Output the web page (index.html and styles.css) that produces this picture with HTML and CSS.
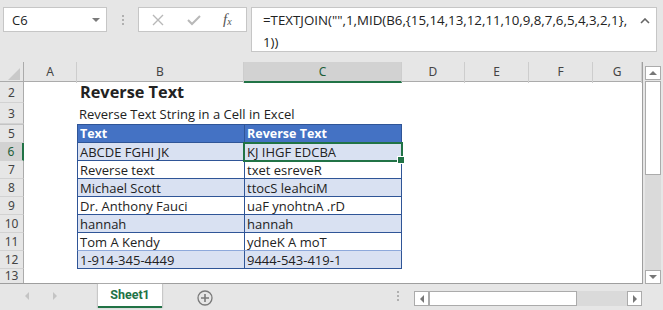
FILE: index.html
```html
<!DOCTYPE html>
<html>
<head>
    <link rel="stylesheet" href="styles.css">
</head>
<body>
    <div class="toolbar">
        <div class="namebox"><span>C6</span><span class="caret"></span></div>
        <div class="grip"><i></i><i></i><i></i></div>
        <div class="fxbox">
            <svg width="12" height="12" viewBox="0 0 12 12"><path d="M1 1 L11 11 M11 1 L1 11" stroke="#b8b8b8" stroke-width="1.4" fill="none"/></svg>
            <svg width="14" height="12" viewBox="0 0 14 12"><path d="M1 6 L5 10 L13 2" stroke="#b8b8b8" stroke-width="2" fill="none"/></svg>
            <span class="fx">f<sub>x</sub></span>
        </div>
        <div class="formula">
            <div class="ftext">=TEXTJOIN("",1,MID(B6,{15,14,13,12,11,10,9,8,7,6,5,4,3,2,1},<br>1))</div>
            <svg class="collapse" width="10" height="6" viewBox="0 0 10 6"><path d="M1 5 L5 1 L9 5" stroke="#666" stroke-width="1.6" fill="none"/></svg>
        </div>
    </div>

    <div class="main">
        <div class="sheet">
            <div class="row colheads">
                <div class="corner"><span class="tri"></span></div>
                <div class="ch">A</div>
                <div class="ch">B</div>
                <div class="ch sel">C</div>
                <div class="ch">D</div>
                <div class="ch">E</div>
                <div class="ch">F</div>
                <div class="ch">G</div>
            </div>
            <div class="row tall">
                <div class="rh">2</div><div></div>
                <div class="cell title">Reverse Text</div><div></div><div></div><div></div><div></div><div></div>
            </div>
            <div class="row tall">
                <div class="rh">3</div><div></div>
                <div class="cell sub">Reverse Text String in a Cell in Excel</div><div></div><div></div><div></div><div></div><div></div>
            </div>
            <div class="row head-row">
                <div class="rh hidden-above">5</div><div></div>
                <div class="cell t th">Text</div><div class="cell t tc th">Reverse Text</div><div></div><div></div><div></div><div></div>
            </div>
            <div class="row">
                <div class="rh sel">6</div><div></div>
                <div class="cell t band">ABCDE FGHI JK</div><div class="cell t tc band active">KJ IHGF EDCBA</div><div></div><div></div><div></div><div></div>
            </div>
            <div class="row">
                <div class="rh">7</div><div></div>
                <div class="cell t">Reverse text</div><div class="cell t tc">txet esreveR</div><div></div><div></div><div></div><div></div>
            </div>
            <div class="row">
                <div class="rh">8</div><div></div>
                <div class="cell t band">Michael Scott</div><div class="cell t tc band">ttocS leahciM</div><div></div><div></div><div></div><div></div>
            </div>
            <div class="row">
                <div class="rh">9</div><div></div>
                <div class="cell t">Dr. Anthony Fauci</div><div class="cell t tc">uaF ynohtnA .rD</div><div></div><div></div><div></div><div></div>
            </div>
            <div class="row">
                <div class="rh">10</div><div></div>
                <div class="cell t band">hannah</div><div class="cell t tc band">hannah</div><div></div><div></div><div></div><div></div>
            </div>
            <div class="row">
                <div class="rh">11</div><div></div>
                <div class="cell t light-bottom">Tom A Kendy</div><div class="cell t tc light-bottom">ydneK A moT</div><div></div><div></div><div></div><div></div>
            </div>
            <div class="row">
                <div class="rh">12</div><div></div>
                <div class="cell t band">1-914-345-4449</div><div class="cell t tc band">9444-543-419-1</div><div></div><div></div><div></div><div></div>
            </div>
            <div class="row last">
                <div class="rh">13</div><div></div><div></div><div></div><div></div><div></div><div></div><div></div>
            </div>
        </div>
        <div class="vscroll">
            <div class="sbtn"><span class="arr up"></span></div>
            <div class="vthumb"></div>
            <div class="vtrack"></div>
            <div class="sbtn"><span class="arr down"></span></div>
        </div>
    </div>

    <div class="tabbar">
        <div class="nav"><span class="arr left"></span><span class="arr right"></span></div>
        <div class="tab">Sheet1</div>
        <div class="add">
            <svg width="16" height="16" viewBox="0 0 16 16"><circle cx="8" cy="8" r="7" stroke="#7a7a7a" stroke-width="1.3" fill="none"/><path d="M8 4 V12 M4 8 H12" stroke="#7a7a7a" stroke-width="1.6"/></svg>
        </div>
        <div class="spacer"></div>
        <div class="grip hgrip"><i></i><i></i><i></i></div>
        <div class="hscroll">
            <div class="sbtn"><span class="arr left dark"></span></div>
            <div class="hthumb"></div>
            <div class="htrack"></div>
            <div class="sbtn"><span class="arr right dark"></span></div>
        </div>
    </div>
</body>
</html>
```

FILE: styles.css
```css
* {
    box-sizing: border-box;
}
body {
    margin: 0;
    width: 663px;
    height: 310px;
    overflow: hidden;
    background-color: #e6e6e6;
    font-family: "Open Sans", "Liberation Sans", sans-serif;
    color: #222;
}

/* formula bar */
.toolbar {
    height: 62px;
    display: flex;
    align-items: flex-start;
    padding: 7px 6px 0 3px;
}
.namebox {
    width: 104px;
    height: 25px;
    background-color: #fff;
    border: 1px solid #c6c6c6;
    display: flex;
    align-items: center;
    justify-content: space-between;
    padding: 0 6px 0 8px;
    font-size: 13px;
}
.caret {
    border-left: 4px solid transparent;
    border-right: 4px solid transparent;
    border-top: 4px solid #7a7a7a;
}
.grip {
    width: 31px;
    height: 25px;
    display: flex;
    flex-direction: column;
    align-items: center;
    justify-content: center;
    gap: 2px;
}
.grip i {
    width: 2px;
    height: 2px;
    background-color: #b0b0b0;
}
.fxbox {
    width: 109px;
    height: 25px;
    background-color: #fff;
    border: 1px solid #c6c6c6;
    display: flex;
    align-items: center;
    padding-left: 13px;
    gap: 23px;
}
.fx {
    font-family: "Liberation Serif", serif;
    font-style: italic;
    font-size: 15px;
    color: #555;
    margin-left: -1px;
}
.fx sub {
    font-size: 10px;
    vertical-align: -1px;
}
.formula {
    margin-left: 4px;
    flex: 1;
    height: 45px;
    background-color: #fff;
    border: 1px solid #c6c6c6;
    display: flex;
    justify-content: space-between;
    padding: 1px 6px 0 11px;
}
.ftext {
    font-size: 13.3px;
    line-height: 22px;
}
.collapse {
    margin-top: 9px;
}

/* grid */
.main {
    display: flex;
    height: 222px;
}
.sheet {
    width: 643px;
    border-right: 1px solid #9e9e9e;
    border-bottom: 1px solid #9e9e9e;
    background-color: #fff;
    overflow: hidden;
}
.row {
    display: grid;
    grid-template-columns: 24px 53px 167px 158px 63px 64px 64px 49px;
    height: 18px;
}
.row.tall {
    height: 21px;
}
.row.head-row {
    height: 19px;
}
.colheads {
    height: 20px;
    background-color: #e6e6e6;
    border-bottom: 1px solid #ababab;
}
.corner {
    border-right: 1px solid #ababab;
    position: relative;
}
.tri {
    position: absolute;
    right: 3px;
    bottom: 3px;
    border-left: 12px solid transparent;
    border-bottom: 12px solid #c9c9c9;
}
.ch {
    font-family: "Noto Sans", sans-serif;
    font-size: 12px;
    color: #444;
    text-align: center;
    line-height: 19px;
    border-right: 1px solid #cdcdcd;
}
.ch.sel {
    background-color: #d2d2d2;
    color: #1d5e38;
    border-bottom: 2px solid #217346;
}
.rh {
    background-color: #e6e6e6;
    font-family: "Noto Sans", sans-serif;
    font-size: 12px;
    color: #444;
    text-align: center;
    border-right: 1px solid #ababab;
    border-bottom: 1px solid #d2d2d2;
    display: flex;
    align-items: center;
    justify-content: center;
}
.row.last .rh {
    align-items: flex-start;
    line-height: 14px;
}
.rh.sel {
    background-color: #d2d2d2;
    color: #1d5e38;
    border-right: 2px solid #217346;
}
.rh.hidden-above {
    border-top: 1px solid #c4c4c4;
}

.cell {
    font-size: 13px;
    line-height: 16px;
    white-space: nowrap;
    padding: 0 2px 0 2px;
    display: flex;
    align-items: flex-end;
}
.title {
    font-weight: bold;
    font-size: 16.3px;
    line-height: 20px;
    padding-left: 3px;
    padding-bottom: 1px;
}
.sub {
    padding-left: 2px;
    padding-bottom: 2px;
}
.t {
    border-left: 1px solid #2f5597;
    border-bottom: 1px solid #2f5597;
}
.t.tc {
    border-right: 1px solid #2f5597;
}
.th {
    background-color: #4472c4;
    color: #fff;
    font-weight: bold;
    font-size: 12.5px;
    border-top: 1px solid #2f5597;
}
.band {
    background-color: #d9e1f2;
}
.light-bottom {
    border-bottom-color: #8ea9db;
}
.active {
    position: relative;
    outline: 2px solid #217346;
    outline-offset: -1px;
}
.active::after {
    content: "";
    position: absolute;
    right: -4px;
    bottom: -4px;
    width: 6px;
    height: 6px;
    background-color: #217346;
    border: 1px solid #fff;
}

/* scrollbars */
.vscroll {
    width: 20px;
    padding: 4px 2px 0 2px;
    display: flex;
    flex-direction: column;
}
.sbtn {
    width: 16px;
    height: 14px;
    background-color: #fff;
    border: 1px solid #ababab;
    display: flex;
    align-items: center;
    justify-content: center;
}
.vthumb {
    height: 94px;
    background-color: #fff;
    border: 1px solid #ababab;
    margin-top: 1px;
}
.vtrack {
    flex: 1;
    background-color: #dadada;
}
.arr {
    width: 0;
    height: 0;
}
.arr.up {
    border-left: 4px solid transparent;
    border-right: 4px solid transparent;
    border-bottom: 4px solid #777;
}
.arr.down {
    border-left: 4px solid transparent;
    border-right: 4px solid transparent;
    border-top: 4px solid #777;
}
.arr.left {
    border-top: 4px solid transparent;
    border-bottom: 4px solid transparent;
    border-right: 4px solid #c4c4c4;
}
.arr.right {
    border-top: 4px solid transparent;
    border-bottom: 4px solid transparent;
    border-left: 4px solid #c4c4c4;
}
.arr.dark.left {
    border-right-color: #777;
}
.arr.dark.right {
    border-left-color: #777;
}

/* sheet tabs */
.tabbar {
    height: 26px;
    display: flex;
    align-items: flex-start;
}
.nav {
    width: 98px;
    height: 24px;
    display: flex;
    align-items: center;
    padding-left: 25px;
    gap: 24px;
}
.tab {
    width: 64px;
    height: 24px;
    background-color: #fff;
    border-bottom: 2px solid #217346;
    box-shadow: 1px 0 1px #c8c8c8, -1px 0 1px #c8c8c8;
    color: #217346;
    font-family: Roboto, sans-serif;
    font-weight: bold;
    font-size: 12.5px;
    text-align: center;
    line-height: 22px;
}
.add {
    margin-left: 35px;
    padding-top: 5px;
}
.spacer {
    flex: 1;
}
.hgrip {
    width: 32px;
    height: 20px;
    padding-top: 4px;
}
.hscroll {
    width: 249px;
    height: 22px;
    padding: 7px 21px 0 0;
    display: flex;
}
.hscroll .sbtn {
    width: 15px;
    height: 15px;
}
.hthumb {
    width: 148px;
    background-color: #fff;
    border: 1px solid #ababab;
    height: 15px;
}
.htrack {
    flex: 1;
    background-color: #dadada;
    height: 15px;
}
```
